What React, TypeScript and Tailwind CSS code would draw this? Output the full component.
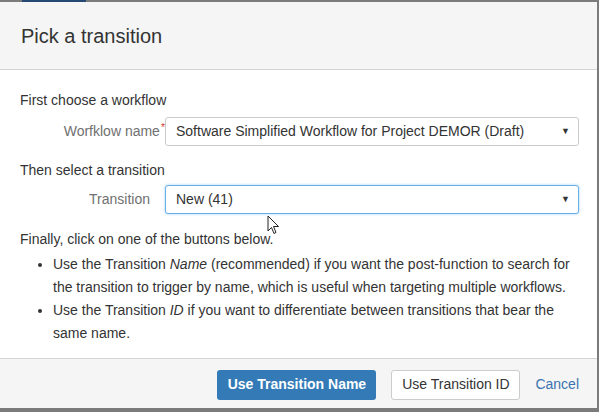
export default function App() {
  return (
    <div className="relative h-[412px] w-[599px] overflow-hidden bg-[#7b7b7b] font-['Liberation_Sans',Arial,sans-serif] text-[14px] text-[#333]">
      {/* page behind the dialog */}
      <div className="absolute left-[22px] top-0 h-[2px] w-[64px] bg-[#244a73]" />
      <div className="absolute left-0 top-[2px] flex h-[406px] w-[597px] flex-col rounded-tl-[3px] bg-white">
        {/* header */}
        <div className="flex h-[68px] items-center border-b border-[#d4d4d4] bg-[#f5f5f5] px-[21px]">
          <h2 className="text-[20px] text-[#333]">Pick a transition</h2>
        </div>

        {/* body */}
        <div className="flex-1 pl-[20px] pr-[18px] pt-[20px]">
          <p className="leading-[20px]">First choose a workflow</p>
          <div className="mt-[7px] flex items-center">
            <label className="w-[145px] shrink-0 text-right text-[#707070]">
              Worfklow name<sup className="ml-[1px] text-[#d04437]">*</sup>
            </label>
            <div className="relative flex h-[29px] w-[414px] items-center rounded-[3px] border border-[#ccc] bg-white pl-[10px]">
              Software Simplified Workflow for Project DEMOR (Draft)
              <span className="absolute right-[8px] text-[9px] text-[#333]">▼</span>
            </div>
          </div>

          <p className="mt-[14px] leading-[20px]">Then select a transition</p>
          <div className="mt-[5px] flex items-center">
            <label className="w-[130px] shrink-0 text-right text-[#707070]">Transition</label>
            <div className="relative ml-[15px] flex h-[29px] w-[414px] items-center rounded-[3px] border border-[#66afe9] bg-white pl-[10px] shadow-[0_0_3px_rgba(102,175,233,0.6)]">
              New (41)
              <span className="absolute right-[8px] text-[9px] text-[#333]">▼</span>
            </div>
          </div>

          <p className="mt-[15px] leading-[20px]">Finally, click on one of the buttons below.</p>
          <ul className="mt-[4px] list-disc pl-[33px] leading-[23px]">
            <li>
              Use the Transition <em>Name</em> (recommended) if you want the post-function to search for the
              transition to trigger by name, which is useful when targeting multiple workflows.
            </li>
            <li>
              Use the Transition <em>ID</em> if you want to differentiate between transitions that bear the same
              name.
            </li>
          </ul>
        </div>

        {/* footer */}
        <div className="flex h-[50px] items-center justify-end gap-[15px] border-t border-[#d4d4d4] bg-[#f5f5f5] pr-[18px] pt-[2px]">
          <button className="h-[30px] w-[159px] rounded-[3px] bg-[#337ab7] font-bold text-white">
            Use Transition Name
          </button>
          <button className="h-[30px] w-[129px] rounded-[3px] border border-[#ccc] bg-white text-[#333]">
            Use Transition ID
          </button>
          <button className="h-[30px] text-[#3b73af]">Cancel</button>
        </div>
      </div>

      {/* mouse cursor */}
      <svg className="absolute left-[267px] top-[215px]" width="13" height="20" viewBox="0 0 13 20">
        <path d="M1 1 L1 16 L4.5 12.5 L7 18.5 L9 17.5 L6.5 11.5 L11.5 11.5 Z" fill="white" stroke="#222" strokeWidth="1" strokeLinejoin="round" />
      </svg>
    </div>
  );
}
